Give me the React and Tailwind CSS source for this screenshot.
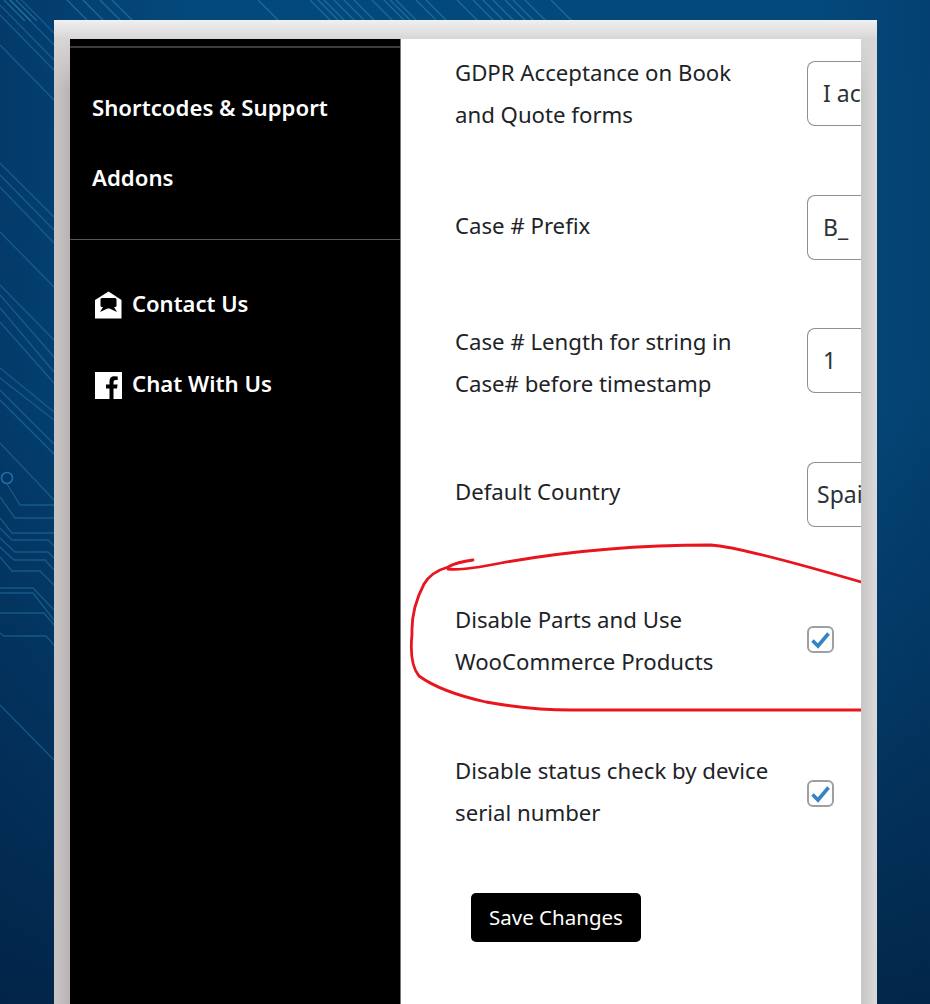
const FONT = "font-['Noto_Sans',sans-serif]";

function Backdrop() {
  const top = [4, 10, 16, 67, 83, 100, 112, 258, 310, 318, 324, 334, 344, 354, 372, 384, 390, 396, 416, 426, 457, 473, 483, 493, 505, 513, 525, 551];
  const diag = [
    [-10, 45], [5, 60], [15, 70], [45, 100], [163, 217], [175, 230], [187, 243], [232, 287], [285, 340], [295, 357], [308, 372], [322, 383],
    [368, 412], [378, 420], [390, 444], [400, 454], [443, 500], [705, 760], [-22, 33],
  ];
  const traces = [
    "M7 484 L20 505 H54", "M0 497 L15 518 H54", "M0 518 L12 533 H54",
    "M0 528 L12 540 H48 L54 546", "M0 538 L15 552 H48 L54 558", "M0 547 L14 560 H45 L54 570", "M0 557 L12 571 H40 L54 585",
    "M0 588 H33 L54 610", "M0 593 H33 L54 620", "M0 613 H44 L54 625", "M0 633 L4 636 H46 L54 645",
  ];
  return (
    <svg className="absolute inset-0" width="930" height="1004" viewBox="0 0 930 1004" fill="none">
      <g stroke="#2a86b0" strokeOpacity="0.6" strokeWidth="1.3">
        {top.map((x) => <path key={x} d={`M${x} 0 L${x + 21} 21`} />)}
      </g>
      <g stroke="#2a7cb0" strokeOpacity="0.5" strokeWidth="1.3">
        {diag.map(([a, b]) => <path key={a} d={`M0 ${a} L54 ${b}`} />)}
        {traces.map((d) => <path key={d} d={d} />)}
      </g>
      <circle cx="7" cy="478" r="5.5" fill="#03356a" stroke="#2a7cb0" strokeOpacity="0.8" strokeWidth="1.6" />
    </svg>
  );
}

function SideLink({ children, className = "" }) {
  return <div className={`pl-[22px] text-[22.2px] leading-[30px] font-semibold text-white ${className}`}>{children}</div>;
}

function MailIcon() {
  return (
    <svg width="29" height="28" viewBox="0 0 29 28" className="shrink-0">
      <path fill="#fff" d="M1 9 L14.5 0.5 L27.5 9 V27.5 H1 Z" />
      <path fill="#000" d="M6.5 8.5 Q6.5 7 8 7 H21 Q22.5 7 22.5 8.5 V14.5 Q22.5 16 21 16 H20 L23 21 L15.5 17.5 H13.5 L6 21 L9 16 H8 Q6.5 16 6.5 14.5 Z" />
    </svg>
  );
}

function FacebookIcon() {
  return (
    <svg width="27" height="27" viewBox="0 0 27 27" className="shrink-0">
      <rect width="27" height="27" fill="#fff" />
      <path fill="#000" d="M18.5 27 V16.5 H22 L22.6 12.5 H18.5 V10 Q18.5 8 20.6 8 H22.7 V4.4 Q21 4.2 19.4 4.2 Q14.5 4.2 14.5 9.4 V12.5 H11 V16.5 H14.5 V27 Z" />
    </svg>
  );
}

function Row({ lines, className = "", children }) {
  return (
    <div className={`flex justify-between ${className}`}>
      <div className="text-[22.2px] leading-[42px] text-[#1d2327] whitespace-nowrap">
        {lines.map((l) => <div key={l}>{l}</div>)}
      </div>
      {children}
    </div>
  );
}

function Field({ value, className = "" }) {
  return (
    <div className={`w-[54px] h-[65px] shrink-0 ml-auto border-[1.5px] border-r-0 border-[#8c8f94] rounded-l-[8px] flex items-center overflow-hidden text-[23px] text-[#2c3338] whitespace-nowrap ${className}`}>
      {value}
    </div>
  );
}

function Check({ className = "" }) {
  return (
    <div className={`ml-auto mr-[27px] w-[27px] h-[27px] shrink-0 border-2 border-[#9ca0a5] rounded-[6px] bg-white flex items-center justify-center ${className}`}>
      <svg width="21" height="18" viewBox="0 0 21 18">
        <path d="M2.5 9.5 L8 15 L18.5 2.5" fill="none" stroke="#3582c4" strokeWidth="3.6" />
      </svg>
    </div>
  );
}

export default function App() {
  return (
    <div className={`relative w-[930px] h-[1004px] overflow-hidden bg-[linear-gradient(90deg,rgba(2,30,70,0.35)_0%,rgba(2,30,70,0)_20%,rgba(2,30,70,0)_88%,rgba(2,30,70,0.2)_100%),linear-gradient(180deg,#04497c_0%,#044a7c_40%,#033a66_70%,#02284a_100%)] pt-5 pl-[54px] ${FONT}`}>
      <Backdrop />
      <div className="relative w-[823px] h-[984px] pt-[19px] px-4 bg-[linear-gradient(180deg,#f0f0f0_0px,#d8d5d5_19px,rgba(216,213,213,0)_70px),linear-gradient(90deg,#cac5c5_0px,#b9b4b4_16px,#c8c5c5_807px,#dcdada_823px)]">
        <div className="flex h-[965px] w-[791px]">
          <aside className="w-[331px] h-full shrink-0 bg-black border-r border-[#777] pt-[7px]">
            <div className="h-0.5 bg-[#3c3c3c]" />
            <SideLink className="mt-[45px]">Shortcodes &amp; Support</SideLink>
            <SideLink className="mt-[40px]">Addons</SideLink>
            <div className="h-px bg-[#555] mt-[46px]" />
            <div className="pl-6 pt-[51px] flex items-center gap-[9px] text-[22px] leading-[30px] font-semibold text-white">
              <MailIcon />
              <span className="-mt-[4px]">Contact Us</span>
            </div>
            <div className="pl-[25px] mt-[52px] flex items-center gap-[10px] text-[22.2px] leading-[30px] font-semibold text-white">
              <FacebookIcon />
              <span className="-mt-[2px]">Chat With Us</span>
            </div>
          </aside>
          <main className="relative flex-1 bg-white pl-[54px] overflow-hidden">
            <Row lines={["GDPR Acceptance on Book", "and Quote forms"]} className="mt-[13px]">
              <Field value="I ac" className="mt-[9px] pl-[15px]" />
            </Row>
            <Row lines={["Case # Prefix"]} className="mt-[69px]">
              <Field value="B_" className="-mt-[10px] pl-[15px]" />
            </Row>
            <Row lines={["Case # Length for string in", "Case# before timestamp"]} className="mt-[61px]">
              <Field value="1" className="mt-[7px] pl-[15px]" />
            </Row>
            <Row lines={["Default Country"]} className="mt-[66px]">
              <Field value="Spain" className="-mt-[9px] pl-[9px]" />
            </Row>
            <Row lines={["Disable Parts and Use", "WooCommerce Products"]} className="mt-[72px]">
              <Check className="mt-[27px]" />
            </Row>
            <Row lines={["Disable status check by device", "serial number"]} className="mt-[67px]">
              <Check className="mt-[30px]" />
            </Row>
            <button className="mt-[59px] ml-4 block w-[170px] h-[49px] bg-black text-white rounded-[5px] text-[20.5px] leading-[49px] text-center">Save Changes</button>
            <svg className="absolute left-0 top-[495px]" width="460" height="190" viewBox="0 0 460 190" fill="none">
              <path stroke="#e9141d" strokeWidth="2.8" strokeLinecap="round" d="M72 26 Q56 28 47 33 Q30 38 23 50 Q10 75 11 100 Q8 130 18 142 Q40 158 85 168 Q130 176 170 176 H460" />
              <path stroke="#e9141d" strokeWidth="2.8" strokeLinecap="round" d="M47 35 Q60 37 100 29 Q200 11 310 11 Q340 13 460 48" />
            </svg>
          </main>
        </div>
      </div>
    </div>
  );
}
